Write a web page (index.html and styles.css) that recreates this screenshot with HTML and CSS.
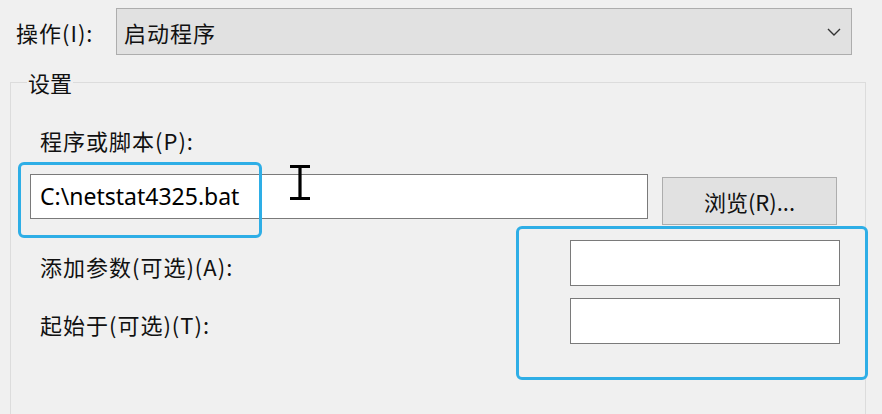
FILE: index.html
```html
<!DOCTYPE html>
<html lang="zh-CN">
<head>
  <meta charset="UTF-8">
  <title>编辑操作</title>
  <link rel="stylesheet" href="styles.css">
</head>
<body>
  <div class="page">
    <div class="action-row">
      <label class="action-label">操作(<u>I</u>):</label>
      <div class="combo">
        <span>启动程序</span>
        <svg class="chevron" width="14" height="8" viewBox="0 0 14 8"><polyline points="1,1 7,7 13,1" fill="none" stroke="#333" stroke-width="1.4"/></svg>
      </div>
    </div>

    <fieldset class="group">
      <legend>设置</legend>

      <div class="label-top">程序或脚本(<u>P</u>):</div>
      <div class="program-row">
        <div class="textbox wide">C:\netstat4325.bat</div>
        <button class="browse-btn">浏览(<u>R</u>)...</button>
      </div>

      <div class="arg-row first">
        <span class="arg-label">添加参数(可选)(<u>A</u>):</span>
        <div class="textbox small"></div>
      </div>
      <div class="arg-row">
        <span class="arg-label">起始于(可选)(<u>T</u>):</span>
        <div class="textbox small"></div>
      </div>
    </fieldset>

    <div class="mark mark-program"></div>
    <div class="mark mark-args"></div>
    <svg class="ibeam" width="24" height="36" viewBox="0 0 24 36">
      <path d="M2 1.5h20M2 33.5h20M12 1.5v32" fill="none" stroke="#000" stroke-width="3.2"/>
    </svg>
  </div>
</body>
</html>
```

FILE: styles.css
```css
* { margin: 0; padding: 0; box-sizing: border-box; }
body { background: #f0f0f0; font-family: "Noto Sans CJK SC", "Noto Sans", sans-serif; font-size: 22px; color: #111; letter-spacing: 1px; overflow: hidden; }
u { text-decoration: none; }
.page { position: relative; width: 882px; height: 414px; }

.action-row { display: flex; align-items: center; padding: 8px 0 0 16px; }
.action-label { width: 100px; line-height: 30px; }
.combo { width: 736px; height: 47px; background: #e1e1e1; border: 1px solid #adadad; display: flex; align-items: center; justify-content: space-between; padding: 0 10px 0 7px; }
.combo span { line-height: 30px; }
.chevron { margin-top: 1px; }

.group { margin: 14px 0 0 10px; width: 856px; border: 1px solid #dcdcdc; border-bottom: none; padding: 30px 25px 80px 19px; min-width: 0; }
.group legend { margin-left: -3px; padding: 0 1px; line-height: 26px; letter-spacing: 0; }

.label-top { margin-left: 10px; line-height: 30px; }
.program-row { display: flex; align-items: flex-start; gap: 14px; margin-top: 19px; }
.textbox { background: #fff; border: 1px solid #7a7a7a; }
.textbox.wide { width: 618px; height: 45px; padding-left: 9px; font-family: "Noto Sans", "Open Sans", sans-serif; font-size: 23px; line-height: 43px; color: #000; letter-spacing: 0; }
.textbox.small { width: 270px; height: 46px; }
.browse-btn { margin-top: 3px; width: 175px; height: 48px; background: #e1e1e1; border: 1px solid #adadad; font-family: inherit; font-size: 22px; color: #111; letter-spacing: 0; }

.arg-row { display: flex; align-items: center; justify-content: space-between; margin-top: 12px; }
.arg-row.first { margin-top: 15px; }
.arg-label { margin-left: 10px; line-height: 30px; padding-top: 6px; }

.mark { position: absolute; border: 3px solid #2eaee6; border-radius: 6px; }
.mark-program { left: 18px; top: 162px; width: 244px; height: 76px; }
.mark-args { left: 516px; top: 226px; width: 352px; height: 154px; }
.ibeam { position: absolute; left: 288px; top: 165px; }
```
